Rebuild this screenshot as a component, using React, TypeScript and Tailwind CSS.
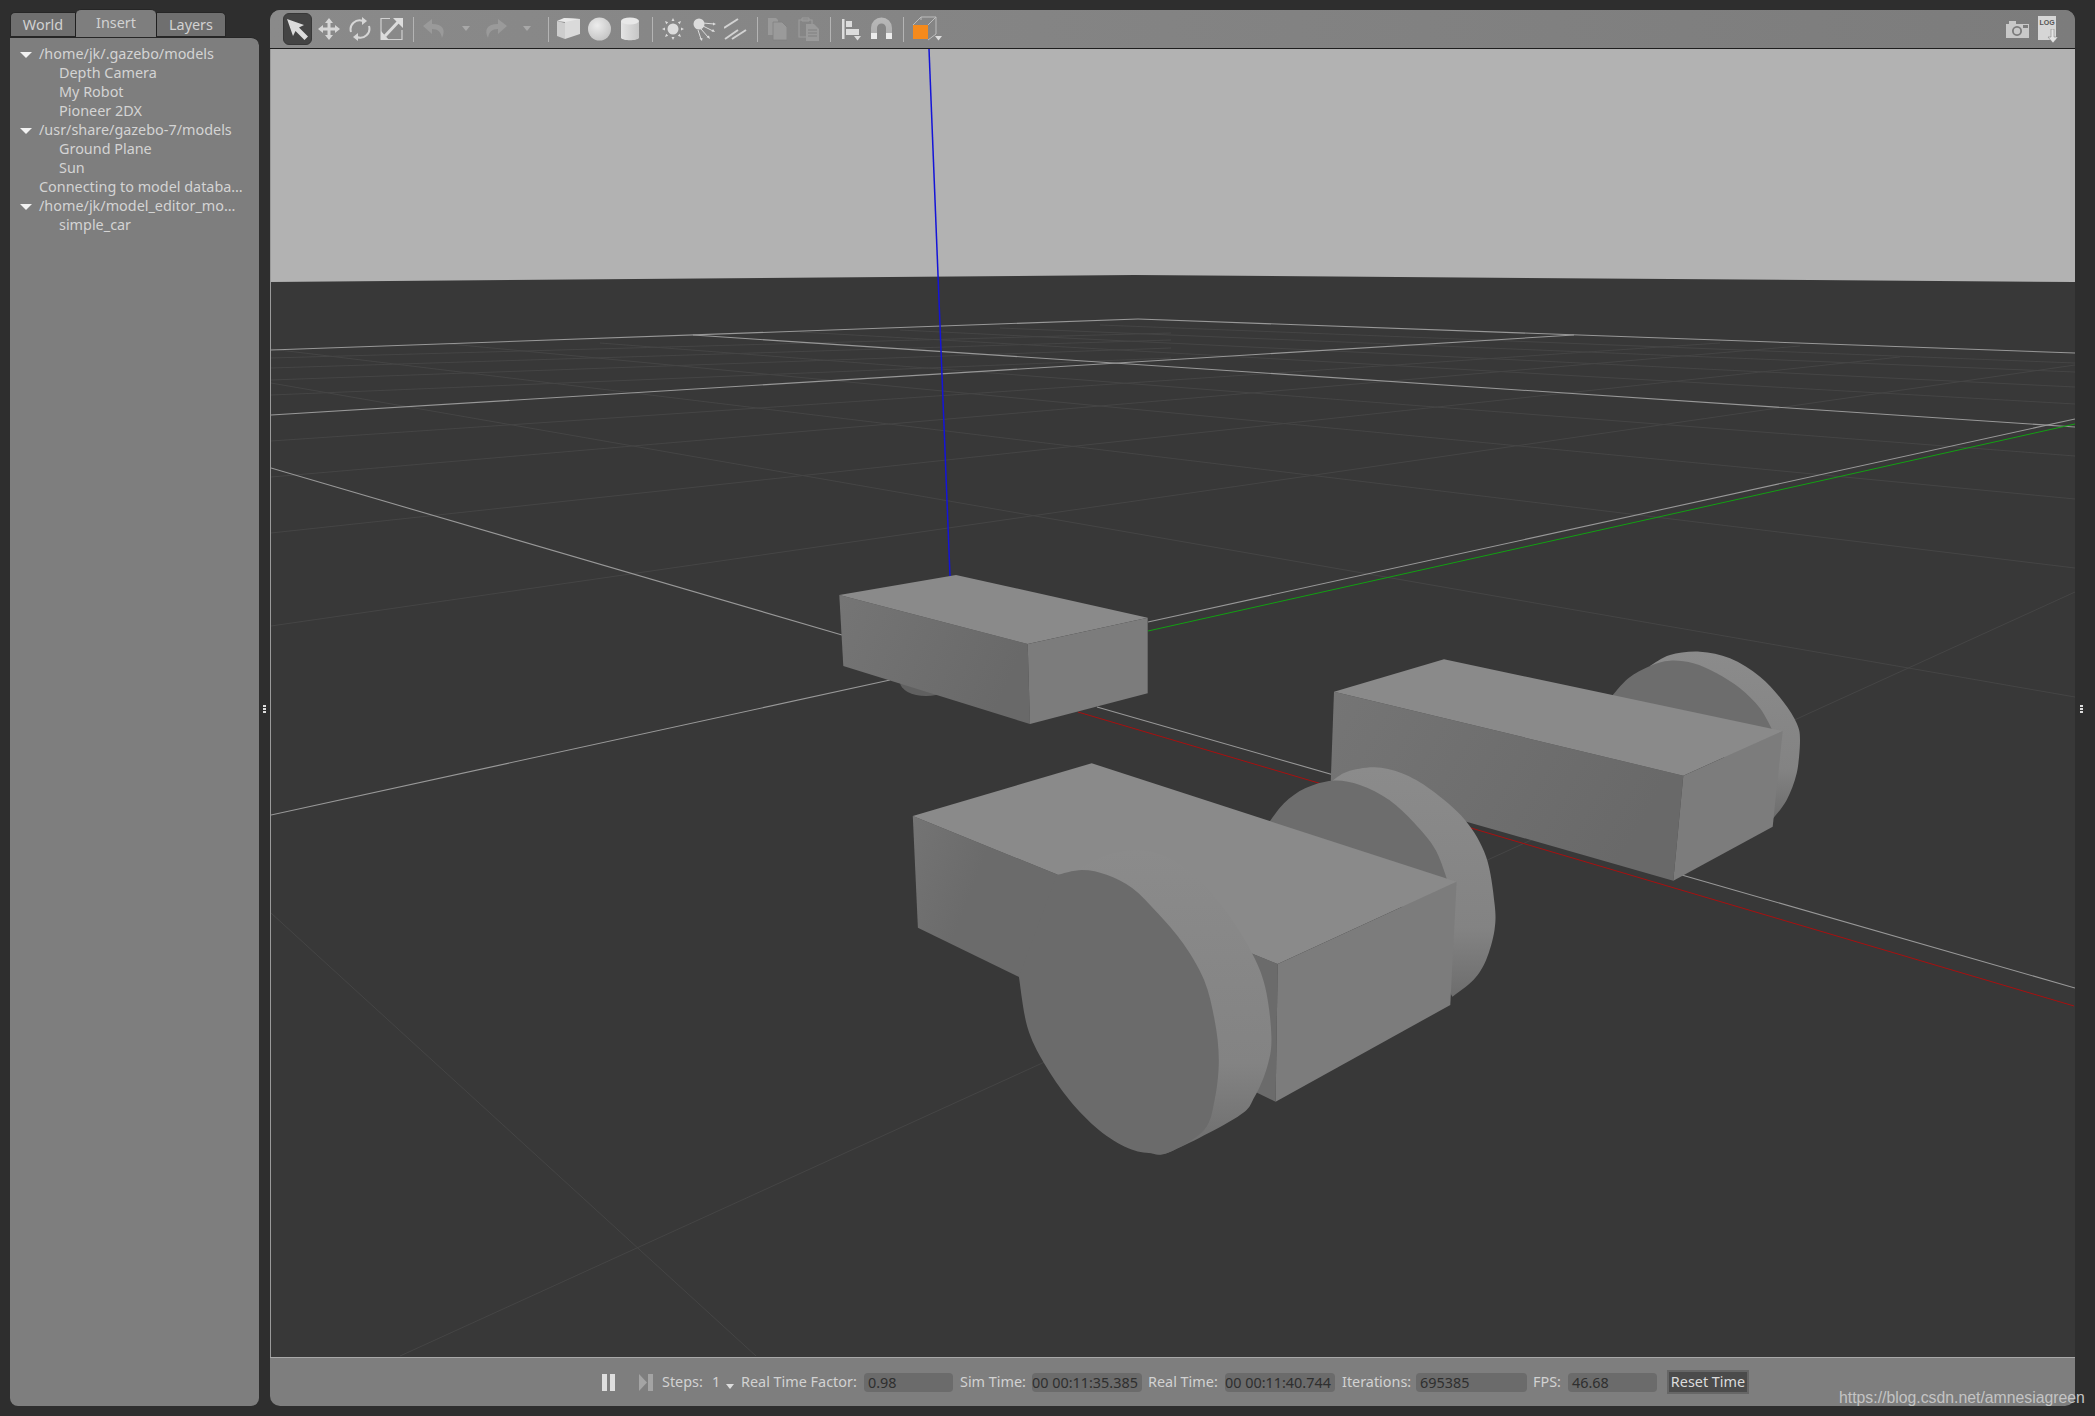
import React from "react";

/* ─── Helpers ─────────────────────────────────────────────────────────────── */
// Traced outlines are noted in crop coordinates, then mapped back to page pixels.
const map = (ox: number, oy: number, sx: number, sy: number, list: number[][]) =>
  list.map(([x, y]) => [ox + x / sx, oy + y / sy]);

const poly = (list: number[][]) => list.map(([x, y]) => `${x.toFixed(1)},${y.toFixed(1)}`).join(" ");

// Catmull-Rom through the traced points, so the wheels read as round
const curve = (p: number[][]) => {
  let d = `M${p[0][0].toFixed(1)} ${p[0][1].toFixed(1)}`;
  for (let i = 0; i < p.length - 1; i++) {
    const a = p[Math.max(i - 1, 0)];
    const b = p[i];
    const c = p[i + 1];
    const e = p[Math.min(i + 2, p.length - 1)];
    const c1x = b[0] + (c[0] - a[0]) / 6;
    const c1y = b[1] + (c[1] - a[1]) / 6;
    const c2x = c[0] - (e[0] - b[0]) / 6;
    const c2y = c[1] - (e[1] - b[1]) / 6;
    d += `C${c1x.toFixed(1)} ${c1y.toFixed(1)} ${c2x.toFixed(1)} ${c2y.toFixed(1)} ${c[0].toFixed(1)} ${c[1].toFixed(1)}`;
  }
  return d + "Z";
};

const car1 = (list: number[][]) => map(800, 540, 3, 3, list);
const car2 = (list: number[][]) => map(880, 740, 2.376, 3, list);
const car3 = (list: number[][]) => map(1300, 630, 3, 3, list);

/* ─── Static data ─────────────────────────────────────────────────────────── */
const BRIGHT: number[][] = [
  [271, 350, 1138, 319],
  [1138, 319, 2075, 353],
  [271, 415, 1574, 335],
  [693, 335, 2075, 427],
  [271, 468, 842, 635],
  [271, 815, 890, 680],
  [1148, 622, 2075, 419],
  [1097, 707, 2075, 988],
];

const FAINT: number[][] = [
  [271, 626, 2075, 365],
  [271, 533, 1900, 357],
  [271, 477, 1800, 346],
  [271, 441, 1720, 343],
  [271, 395, 1171, 358],
  [271, 380, 1171, 348],
  [271, 368, 1171, 340],
  [271, 358, 1171, 333],
  [271, 383, 2075, 697],
  [271, 349, 2075, 568],
  [450, 344, 2075, 499],
  [600, 343, 2075, 456],
  [800, 332, 2075, 404],
  [900, 330, 2075, 387],
  [1000, 328, 2075, 372],
  [1100, 325, 2075, 363],
  [271, 913, 756, 1356],
  [400, 1356, 2075, 592],
];

const TREE: { text: string; depth: 0 | 1; open?: boolean }[] = [
  { text: "/home/jk/.gazebo/models", depth: 0, open: true },
  { text: "Depth Camera", depth: 1 },
  { text: "My Robot", depth: 1 },
  { text: "Pioneer 2DX", depth: 1 },
  { text: "/usr/share/gazebo-7/models", depth: 0, open: true },
  { text: "Ground Plane", depth: 1 },
  { text: "Sun", depth: 1 },
  { text: "Connecting to model databa…", depth: 0 },
  { text: "/home/jk/model_editor_mo…", depth: 0, open: true },
  { text: "simple_car", depth: 1 },
];

/* ─── Toolbar icons ───────────────────────────────────────────────────────── */
const Sep = ({ ml }: { ml: string }) => <div className={`w-px h-[25px] bg-[#b4b4b4] ${ml}`} />;

const SmallArrow = ({ className }: { className: string }) => (
  <svg width="10" height="6" viewBox="0 0 10 6" className={className}>
    <path d="M1 0h8L5 5z" fill="#a8a8a8" />
  </svg>
);

const SelectIcon = () => (
  <div className="w-[29px] h-[32px] ml-[13px] rounded-[6px] bg-[#444444] border border-[#383838] flex items-center justify-center">
    <svg width="25" height="25" viewBox="0 0 25 25">
      <path d="M2 2l17 6-5 2.500 9 9-3.500 3.500-9-9L8 19z" fill="#dcdcdc" />
    </svg>
  </div>
);

const MoveIcon = () => (
  <svg width="22" height="24" viewBox="0 0 22 24" className="ml-[6px]" fill="#d6d6d6">
    <path d="M11 1l4 5h-2.500v4.500H17V8l5 4-5 4v-2.500h-4.500V18H15l-4 5-4-5h2.500v-4.500H5V16l-5-4 5-4v2.500h4.500V6H7z" />
  </svg>
);

const RotateIcon = () => (
  <svg width="22" height="24" viewBox="0 0 22 24" className="ml-[9px]" fill="none" stroke="#d6d6d6" strokeWidth="2">
    <path d="M2 15a9 9 0 0 1 12-11" />
    <path d="M20 9a9 9 0 0 1-12 11" />
    <path d="M13 0l5 4-5 4z" fill="#d6d6d6" stroke="none" />
    <path d="M9 24l-5-4 5-4z" fill="#d6d6d6" stroke="none" />
  </svg>
);

const ScaleIcon = () => (
  <svg width="23" height="24" viewBox="0 0 23 24" className="ml-[9px]" fill="none">
    <path d="M10 1.500H1v21h21V13" stroke="#d0d0d0" strokeWidth="1.200" />
    <path d="M5 19l14-15" stroke="#dcdcdc" strokeWidth="3" />
    <path d="M13 1h10v10zM1 23v-9l8 9z" fill="#dcdcdc" />
  </svg>
);

const UndoIcon = ({ flip = false, className }: { flip?: boolean; className: string }) => (
  <svg width="23" height="20" viewBox="0 0 23 20" className={className}>
    <path
      d={"M9 0L0 7l9 8v-5c6 0 9 3 10 9 4-8 1-14-10-14z"}
      fill="#9a9a9a"
      transform={flip ? "matrix(-1 0 0 1 23 0)" : undefined}
    />
  </svg>
);

const BoxIcon = () => (
  <svg width="23" height="24" viewBox="0 0 23 24" className="ml-[8px]">
    <path d="M7 1l16 1v15l-15 5V6z" fill="#dadada" />
    <path d="M0 4l7-3 16 1-15 3z" fill="#e8e8e8" />
    <path d="M0 4l8 2v16l-8-3z" fill="#cdcdcd" />
  </svg>
);

const SphereIcon = () => (
  <svg width="23" height="24" viewBox="0 0 23 24" className="ml-[8px]">
    <defs>
      <radialGradient id="sphere" cx="40%" cy="35%" r="70%">
        <stop offset="0%" stopColor="#ececec" />
        <stop offset="100%" stopColor="#c4c4c4" />
      </radialGradient>
    </defs>
    <circle cx="11.500" cy="12" r="11.500" fill="url(#sphere)" />
  </svg>
);

const CylinderIcon = () => (
  <svg width="18" height="24" viewBox="0 0 18 24" className="ml-[10px]">
    <defs>
      <linearGradient id="cyl" x1="0" x2="1" y1="0" y2="0">
        <stop offset="0%" stopColor="#e4e4e4" />
        <stop offset="100%" stopColor="#c6c6c6" />
      </linearGradient>
    </defs>
    <path d="M0 4v17c2 3 16 3 18 0V4z" fill="url(#cyl)" />
    <ellipse cx="9" cy="4" rx="9" ry="3.500" fill="#e8e8e8" />
  </svg>
);

const SunIcon = () => (
  <svg width="22" height="24" viewBox="0 0 22 24" className="ml-[9px]" fill="#dcdcdc">
    <circle cx="11" cy="12" r="5.500" />
    <path d="M11 1l1.500 3h-3zM11 23l-1.500-3h3zM0 12l3-1.500v3zM22 12l-3 1.500v-3zM3 4l3.200 1.200-2 2zM19 4l-1.200 3.200-2-2zM3 20l1.200-3.200 2 2zM19 20l-3.200-1.200 2-2z" />
  </svg>
);

const SpotIcon = () => (
  <svg width="23" height="24" viewBox="0 0 23 24" className="ml-[9px]" fill="#dcdcdc" stroke="#dcdcdc">
    <circle cx="6" cy="7" r="5.500" stroke="none" />
    <path d="M10 6l11 1M10 9l10 5M8 12l7 8M5 13l3 9" strokeWidth="1" fill="none" />
    <path d="M23 7l-3-1.500v3zM22 15l-3.500-.5 1.500-2.500zM17 22l-3.500-2 2.500-1.500zM9 24l-2.500-2.500 3-.5z" stroke="none" />
  </svg>
);

const DirIcon = () => (
  <svg width="23" height="24" viewBox="0 0 23 24" className="ml-[8px]" stroke="#d2d2d2" strokeWidth="2" fill="none">
    <path d="M0 11L14 2" />
    <path d="M1 22l13-9" />
    <path d="M8 22l14-9" />
  </svg>
);

const CopyIcon = () => (
  <svg width="19" height="24" viewBox="0 0 19 24" className="ml-[10px]" fill="#9a9a9a">
    <path d="M0 1h8l2 2v15H0z" />
    <path d="M5 5h9l5 5v13H5z" stroke="#808080" strokeWidth="0.800" />
  </svg>
);

const PasteIcon = () => (
  <svg width="21" height="24" viewBox="0 0 21 24" className="ml-[11px]">
    <path d="M1 3h13v17H1z" fill="none" stroke="#9c9c9c" strokeWidth="1.200" />
    <path d="M4 1h7v3H4z" fill="none" stroke="#9c9c9c" />
    <path d="M8 7h8l5 5v12H8z" fill="#9a9a9a" />
    <path d="M10 13h9M10 16h9M10 19h9" stroke="#808080" />
  </svg>
);

const AlignIcon = () => (
  <svg width="19" height="24" viewBox="0 0 19 24" className="ml-[11px]" fill="#dcdcdc">
    <path d="M0 2h2.500v20H0zM4 4h6v6H4zM4 12h13v6H4z" />
    <path d="M12 19h7l-3.500 4.500z" />
  </svg>
);

const MagnetIcon = () => (
  <svg width="23" height="24" viewBox="0 0 23 24" className="ml-[9px]">
    <defs>
      <linearGradient id="mag" x1="0" x2="0" y1="0" y2="1">
        <stop offset="0%" stopColor="#b8b8b8" />
        <stop offset="70%" stopColor="#b0b0b0" />
        <stop offset="70%" stopColor="#ececec" />
        <stop offset="100%" stopColor="#ececec" />
      </linearGradient>
    </defs>
    <path d="M1 22V11a10.500 10.500 0 0 1 21 0v11h-6V11a4.500 4.500 0 0 0-9 0v11z" fill="url(#mag)" />
  </svg>
);

const CubeIcon = () => (
  <svg width="31" height="26" viewBox="0 0 31 26" className="ml-[8px]">
    <path d="M1 9L9 1h15v17l-8 6" fill="none" stroke="#bcbcbc" strokeWidth="1" />
    <path d="M9 1v3M16 9l8-8" fill="none" stroke="#bcbcbc" strokeWidth="1" />
    <rect x="1" y="9" width="15" height="14" fill="#f58a1c" />
    <path d="M23 20h7l-3.500 4.500z" fill="#dcdcdc" />
  </svg>
);

const CameraIcon = () => (
  <svg width="23" height="18" viewBox="0 0 23 18" fill="#c8c8c8">
    <path d="M0 4h3V1h7v3h13v14H0zM11 6a5 5 0 1 0 .01 0zM17 5v3h5V5z" fillRule="evenodd" />
    <circle cx="11" cy="11" r="3.200" />
  </svg>
);

const LogIcon = () => (
  <div className="relative w-[21px] h-[27px] ml-[9px] mt-[1px]">
    <div className="w-[18px] h-[24px] bg-[#d6d6d6] text-[7px] leading-[14px] font-bold text-center text-[#555555] font-['Liberation_Sans',sans-serif]">
      LOG
    </div>
    <svg width="12" height="14" viewBox="0 0 12 14" className="absolute right-0 bottom-0">
      <path d="M4 0h3v8h4l-5 6-5-6h3z" fill="#e4e4e4" stroke="#777777" strokeWidth="0.500" />
    </svg>
  </div>
);

/* ─── Scene ───────────────────────────────────────────────────────────────── */
const Scene = () => (
  <svg viewBox="271 49 1804 1308" className="block w-[1804px] h-[1308px]">
    <defs>
      <linearGradient id="side" x1="0" x2="1" y1="0" y2="0.300">
        <stop offset="0%" stopColor="#757575" />
        <stop offset="100%" stopColor="#696969" />
      </linearGradient>
      <linearGradient id="sideFront" x1="0" x2="1" y1="0" y2="0.300">
        <stop offset="0%" stopColor="#747474" />
        <stop offset="22%" stopColor="#6b6b6b" />
        <stop offset="100%" stopColor="#6b6b6b" />
      </linearGradient>
      <linearGradient id="rim" x1="0" x2="0" y1="0" y2="1">
        <stop offset="0%" stopColor="#8b8b8b" />
        <stop offset="70%" stopColor="#838383" />
        <stop offset="100%" stopColor="#6d6d6d" />
      </linearGradient>
    </defs>

    <rect x="271" y="49" width="1804" height="1308" fill="#383838" />
    <polygon points="271,49 2075,49 2075,282 1135,275 271,282" fill="#b2b2b2" />

    {FAINT.map(([x1, y1, x2, y2]) => (
      <line key={`${x1}-${y1}-${x2}`} x1={x1} y1={y1} x2={x2} y2={y2} stroke="#454545" strokeWidth="1" />
    ))}
    {BRIGHT.map(([x1, y1, x2, y2]) => (
      <line key={`${x1}-${y1}-${x2}`} x1={x1} y1={y1} x2={x2} y2={y2} stroke="#989898" strokeWidth="1.100" />
    ))}
    <line x1="1148" y1="631" x2="2075" y2="424" stroke="#12a012" strokeWidth="1" />
    <line x1="1078" y1="712" x2="2074" y2="1006" stroke="#a81010" strokeWidth="1" />
    <line x1="929" y1="49" x2="950" y2="576" stroke="#1414d8" strokeWidth="1.500" />

    {/* Box on its caster */}
    <ellipse cx="926" cy="682" rx="26" ry="14" fill="#606060" />
    <polygon points={poly(car1([[118, 165], [683, 312], [690, 552], [130, 378]]))} fill="url(#side)" />
    <polygon points={poly(car1([[118, 165], [468, 105], [1043, 233], [683, 312]]))} fill="#8a8a8a" />
    <polygon points={poly(car1([[683, 312], [1043, 233], [1043, 460], [690, 552]]))} fill="#7c7c7c" />

    {/* Car at the back */}
    <path
      d={curve(car3([[1050, 108], [1110, 75], [1200, 65], [1290, 85], [1380, 140], [1450, 215], [1490, 280], [1500, 330], [1490, 430], [1460, 510], [1420, 565]]))}
      fill="url(#rim)"
    />
    <path
      d={curve(car3([[930, 205], [985, 145], [1050, 108], [1110, 92], [1180, 100], [1250, 130], [1320, 175], [1380, 235], [1422, 310]]))}
      fill="#6d6d6d"
    />
    <polygon points={poly(car3([[102, 185], [1150, 437], [1120, 752], [92, 459]]))} fill="url(#side)" />
    <polygon points={poly(car3([[102, 185], [432, 88], [1448, 303], [1150, 437]]))} fill="#8a8a8a" />
    <polygon points={poly(car3([[1150, 437], [1448, 303], [1418, 590], [1120, 752]]))} fill="#7c7c7c" />

    {/* Car in front: far wheel, body, near wheel */}
    <path
      d={curve(car2([[1075, 122], [1110, 95], [1175, 82], [1240, 100], [1310, 150], [1390, 240], [1440, 350], [1460, 490], [1460, 570], [1440, 660], [1410, 720], [1360, 770]]))}
      fill="url(#rim)"
    />
    <path
      d={curve(car2([[920, 255], [960, 190], [1010, 145], [1075, 122], [1140, 135], [1210, 180], [1270, 250], [1320, 330], [1352, 435]]))}
      fill="#6d6d6d"
    />
    <polygon points={poly(car2([[78, 228], [945, 672], [940, 1085], [90, 563]]))} fill="url(#sideFront)" />
    <polygon points={poly(car2([[78, 228], [503, 70], [1370, 425], [945, 672]]))} fill="#8a8a8a" />
    <polygon points={poly(car2([[945, 672], [1370, 425], [1355, 795], [940, 1085]]))} fill="#7c7c7c" />
    <path
      d={curve(car2([[420, 405], [470, 385], [540, 345], [610, 330], [680, 350], [750, 410], [820, 510], [880, 630], [915, 740], [930, 890], [920, 980], [890, 1070], [850, 1130], [690, 1235], [645, 1240]]))}
      fill="url(#rim)"
    />
    <path
      d={curve(car2([[420, 405], [480, 390], [540, 405], [600, 445], [660, 520], [720, 610], [770, 720], [795, 840], [805, 960], [795, 1080], [770, 1170], [690, 1235], [645, 1240], [590, 1225], [520, 1170], [450, 1080], [390, 970], [350, 860], [330, 710]]))}
      fill="#6b6b6b"
    />
  </svg>
);

/* ─── Bits of the panels ──────────────────────────────────────────────────── */
const Grip = ({ className }: { className: string }) => (
  <div className={`flex flex-col gap-px items-center ${className}`}>
    <span className="w-[3px] h-[2px] bg-[#dddddd]" />
    <span className="w-[3px] h-[2px] bg-[#dddddd]" />
    <span className="w-[3px] h-[2px] bg-[#dddddd]" />
  </div>
);

const Field = ({ width, text, px = "pl-[4px]" }: { width: string; text: string; px?: string }) => (
  <div className={`h-[19px] rounded-[4px] bg-[#6b6b6b] text-[#2f2f2f] leading-[19px] whitespace-nowrap ${width} ${px}`}>{text}</div>
);

/* ─── App ─────────────────────────────────────────────────────────────────── */
export default function App() {
  return (
    <div className="relative w-[2095px] h-[1416px] bg-[#2e2e2e] flex overflow-hidden text-[14.400px] font-['Noto_Sans',sans-serif]">
      {/* ── Left panel ── */}
      <div className="w-[249px] ml-[10px] mt-[9px] mb-[10px] flex flex-col">
        <div className="flex items-end h-[28px] text-[#d2d2d2]">
          <div className="w-[66px] h-[25px] rounded-tl-[5px] bg-[#6f6f6f] border border-[#262626] border-r-[#1f1f1f] flex items-center justify-center">World</div>
          <div className="w-[80px] h-[28px] rounded-t-[5px] bg-[#7e7e7e] flex items-center justify-center border-t border-[#262626] pb-[2px]">Insert</div>
          <div className="w-[70px] h-[25px] rounded-tr-[5px] bg-[#6f6f6f] border border-[#262626] border-l-[#1f1f1f] flex items-center justify-center">Layers</div>
        </div>
        <div className="flex-1 rounded-tr-[8px] rounded-b-[8px] bg-[#7e7e7e] border-t border-[#262626] pt-[6px]">
          {TREE.map((row) => (
            <div
              key={row.text}
              className={`h-[19px] leading-[19px] flex items-center whitespace-nowrap text-[#d4d4d4] ${row.depth === 1 ? "pl-[49px]" : "pl-[10px]"}`}
            >
              {row.depth === 0 &&
                (row.open ? (
                  <svg width="12" height="6" viewBox="0 0 12 6" className="mr-[7px] mt-[2px]">
                    <path d="M0 0h12L6 6z" fill="#f2f2f2" />
                  </svg>
                ) : (
                  <span className="w-[19px]" />
                ))}
              {row.text}
            </div>
          ))}
        </div>
      </div>

      {/* ── Splitter ── */}
      <div className="w-[11px] flex items-center justify-center">
        <Grip className="mt-[2px]" />
      </div>

      {/* ── Main panel ── */}
      <div className="w-[1805px] mt-[10px] mb-[10px] flex flex-col rounded-[10px] overflow-hidden bg-[#7e7e7e]">
        <div className="h-[39px] flex items-center bg-gradient-to-r from-[#8a8a8a] to-[#7c7c7c] border-b border-[#1e1e1e]">
          <SelectIcon />
          <MoveIcon />
          <RotateIcon />
          <ScaleIcon />
          <Sep ml="ml-[10px]" />
          <UndoIcon className="ml-[9px]" />
          <SmallArrow className="ml-[15px]" />
          <UndoIcon flip className="ml-[13px]" />
          <SmallArrow className="ml-[15px]" />
          <Sep ml="ml-[16px]" />
          <BoxIcon />
          <SphereIcon />
          <CylinderIcon />
          <Sep ml="ml-[13px]" />
          <SunIcon />
          <SpotIcon />
          <DirIcon />
          <Sep ml="ml-[10px]" />
          <CopyIcon />
          <PasteIcon />
          <Sep ml="ml-[11px]" />
          <AlignIcon />
          <MagnetIcon />
          <Sep ml="ml-[10px]" />
          <CubeIcon />
          <div className="ml-auto flex items-center mr-[16px]">
            <CameraIcon />
            <LogIcon />
          </div>
        </div>

        <div className="border-l border-r border-[#9a9a9a]">
          <Scene />
        </div>

        <div className="flex-1 flex items-center border-t border-[#a8a8a8] text-[#d2d2d2] pl-[332px]">
          <svg width="13" height="17" viewBox="0 0 13 17">
            <path d="M0 0h5v17H0zM8 0h5v17H8z" fill="#dedede" />
          </svg>
          <svg width="14" height="17" viewBox="0 0 14 17" className="ml-[24px]">
            <path d="M0 0l8 8.500L0 17z" fill="#a4a4a4" />
            <path d="M9 0h5v17H9z" fill="#a4a4a4" />
          </svg>
          <span className="ml-[9px] w-[50px]">Steps:</span>
          <span className="w-[14px]">1</span>
          <svg width="8" height="5" viewBox="0 0 8 5" className="mt-[8px]">
            <path d="M0 0h8L4 5z" fill="#dddddd" />
          </svg>
          <span className="ml-[7px] w-[123px] whitespace-nowrap">Real Time Factor:</span>
          <Field width="w-[89px]" text="0.98" />
          <span className="ml-[7px] w-[72px] whitespace-nowrap">Sim Time:</span>
          <Field width="w-[110px]" text="00 00:11:35.385" px="pl-0" />
          <span className="ml-[6px] w-[77px] whitespace-nowrap">Real Time:</span>
          <Field width="w-[110px]" text="00 00:11:40.744" px="pl-0" />
          <span className="ml-[7px] w-[74px] whitespace-nowrap">Iterations:</span>
          <Field width="w-[111px]" text="695385" />
          <span className="ml-[6px] w-[35px] whitespace-nowrap">FPS:</span>
          <Field width="w-[89px]" text="46.68" />
          <div className="ml-[10px] w-[82px] h-[24px] bg-[#4b4b4b] border-2 border-[#666666] flex items-center justify-center text-[#dcdcdc] whitespace-nowrap">
            Reset Time
          </div>
        </div>
      </div>

      <div className="w-[20px] flex items-center justify-center">
        <Grip className="mt-[2px] mr-[8px]" />
      </div>

      {/* Watermark sits over the corner of the status bar */}
      <div className="absolute left-[1839px] top-[1389px] text-[15.800px] leading-[18px] text-[#c4c4c4] font-['Liberation_Sans',sans-serif] whitespace-nowrap">
        https://blog.csdn.net/amnesiagreen
      </div>
    </div>
  );
}
